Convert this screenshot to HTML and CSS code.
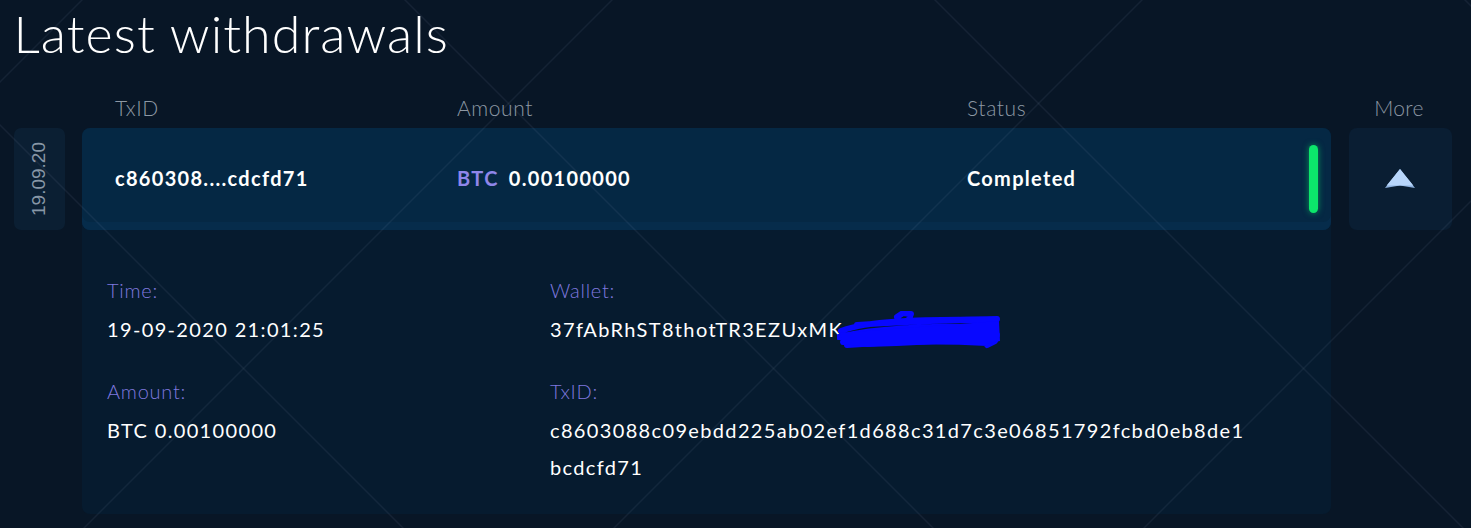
FILE: index.html
```html
<!DOCTYPE html>
<html lang="en">
<head>
<meta charset="utf-8">
<title>Latest withdrawals</title>
<link rel="stylesheet" href="styles.css">
</head>
<body>
<main class="page">
  <h1 class="title">Latest withdrawals</h1>
  <section class="table">
    <div class="head">
      <span class="head-gap"></span>
      <div class="head-cols">
        <span class="col col-tx">TxID</span>
        <span class="col col-amt">Amount</span>
        <span class="col col-st">Status</span>
      </div>
      <span class="head-more">More</span>
    </div>
    <div class="entry">
      <div class="date"><span class="date-text">19.09.20</span></div>
      <div class="card">
        <div class="summary">
          <span class="col col-tx strong">c860308....cdcfd71</span>
          <span class="col col-amt strong"><span class="cur">BTC</span> 0.00100000</span>
          <span class="col col-st strong">Completed</span>
          <span class="status-bar"></span>
        </div>
        <div class="details">
          <div class="field">
            <div class="label">Time:</div>
            <div class="value">19-09-2020 21:01:25</div>
          </div>
          <div class="field">
            <div class="label">Wallet:</div>
            <div class="value">37fAbRhST8thotTR3EZUxMK<svg class="scribble" width="166" height="38" viewBox="0 0 166 38" aria-hidden="true"><path d="M4 20 C30 10 80 8 150 9 M2 26 C40 17 90 15 158 16 M6 31 C50 24 100 23 160 24 M10 34 C60 30 110 30 150 32 M20 14 C70 10 120 9 160 8 M60 6 L66 2 L74 3 L72 8 M150 26 L158 30 L150 34" fill="none" stroke="#0808ff" stroke-width="6" stroke-linecap="round" stroke-linejoin="round"/><path d="M3 22 L162 10 L163 30 L150 33 L100 33 L60 35 L30 36 L6 33 Z" fill="#0808ff"/></svg></div>
          </div>
          <div class="field">
            <div class="label">Amount:</div>
            <div class="value">BTC 0.00100000</div>
          </div>
          <div class="field">
            <div class="label">TxID:</div>
            <div class="value">c8603088c09ebdd225ab02ef1d688c31d7c3e06851792fcbd0eb8de1<br>bcdcfd71</div>
          </div>
        </div>
      </div>
      <div class="more">
        <svg class="arrow" width="30" height="19" viewBox="0 0 30 19" aria-hidden="true">
          <polygon points="15,0 30,19 15,16.5 0,19" fill="#8fb2df"/>
          <polygon points="15,0 28.3,16.6 1.7,16.6" fill="#b8d6fb"/>
        </svg>
      </div>
    </div>
  </section>
</main>
</body>
</html>
```

FILE: styles.css
```css
html, body {
  margin: 0;
  padding: 0;
}

body {
  background: #081626;
  color: #ffffff;
  font-family: Lato, "Open Sans", Arial, sans-serif;
  min-height: 100vh;
  position: relative;
  overflow: hidden;
}

body::after {
  content: "";
  position: fixed;
  inset: 0;
  pointer-events: none;
  background-image:
    linear-gradient(45deg, transparent calc(50% - 0.8px), rgba(150, 170, 195, 0.16) 50%, transparent calc(50% + 0.8px)),
    linear-gradient(135deg, transparent calc(50% - 0.8px), rgba(150, 170, 195, 0.16) 50%, transparent calc(50% + 0.8px));
  background-size: 530px 530px;
  background-position: 243.5px 368.5px;
}

.page {
  padding: 0 20px 0 13.5px;
}

.title {
  margin: 0;
  padding-top: 7px;
  font-size: 52px;
  line-height: 52px;
  font-weight: 300;
  letter-spacing: 1.05px;
  color: #ffffff;
}

.table {
  margin-top: 31px;
}

.head,
.entry {
  display: grid;
  grid-template-columns: 51px 1249px 103px;
  column-gap: 17.5px;
}

.head {
  height: 38px;
  align-items: start;
}

.head-cols {
  display: flex;
  padding-left: 33px;
  font-size: 21px;
  line-height: 35px;
  font-weight: 300;
  letter-spacing: 0.6px;
  color: #8d98a4;
}

.head-more {
  text-align: center;
  font-size: 21px;
  line-height: 35px;
  font-weight: 300;
  letter-spacing: 0.3px;
  color: #8d98a4;
  padding-right: 2px;
}

.col-tx { width: 342px; }
.col-amt { width: 510px; }
.col-st { flex: 1; }

.date {
  height: 102px;
  background: #0b1f33;
  border-radius: 7px;
  display: flex;
  align-items: center;
  justify-content: center;
}

.date-text {
  transform: rotate(-90deg);
  font-family: "Liberation Sans", Arial, sans-serif;
  font-size: 19px;
  color: #8796a6;
  white-space: nowrap;
}

.card {
  background: #061b2f;
  border-radius: 8px;
}

.summary {
  height: 102px;
  display: flex;
  align-items: center;
  padding-left: 33px;
  padding-right: 13px;
  background: #052844;
  border-radius: 8px;
  box-shadow: inset 0 -8px 0 #062c4b;
  font-size: 20px;
  line-height: 24px;
  padding-bottom: 2px;
  box-sizing: border-box;
}

.strong {
  font-weight: 700;
  letter-spacing: 1.3px;
}

.cur {
  color: #8f86ea;
  margin-right: 4px;
}

.summary .col-st {
  flex: 1;
}

.status-bar {
  width: 9px;
  height: 68px;
  margin-top: 2px;
  border-radius: 5px;
  background: #0ce66b;
  box-shadow: 0 0 6px rgba(12, 230, 107, 0.55);
}

.details {
  display: grid;
  grid-template-columns: 443px 1fr;
  padding: 42px 25px 28px;
  row-gap: 24px;
}

.label {
  font-size: 20px;
  line-height: 37px;
  font-weight: 300;
  letter-spacing: 0.75px;
  color: #7f78df;
}

.value {
  margin-top: 2px;
  font-size: 20px;
  line-height: 37px;
  letter-spacing: 1.35px;
  color: #ffffff;
  white-space: nowrap;
}

.scribble {
  vertical-align: middle;
  margin-left: -6px;
  margin-top: -4px;
}

.more {
  height: 102px;
  background: #0a1e33;
  border-radius: 8px;
  display: flex;
  align-items: center;
  justify-content: center;
}

.arrow {
  display: block;
  margin-top: -2px;
}
```
